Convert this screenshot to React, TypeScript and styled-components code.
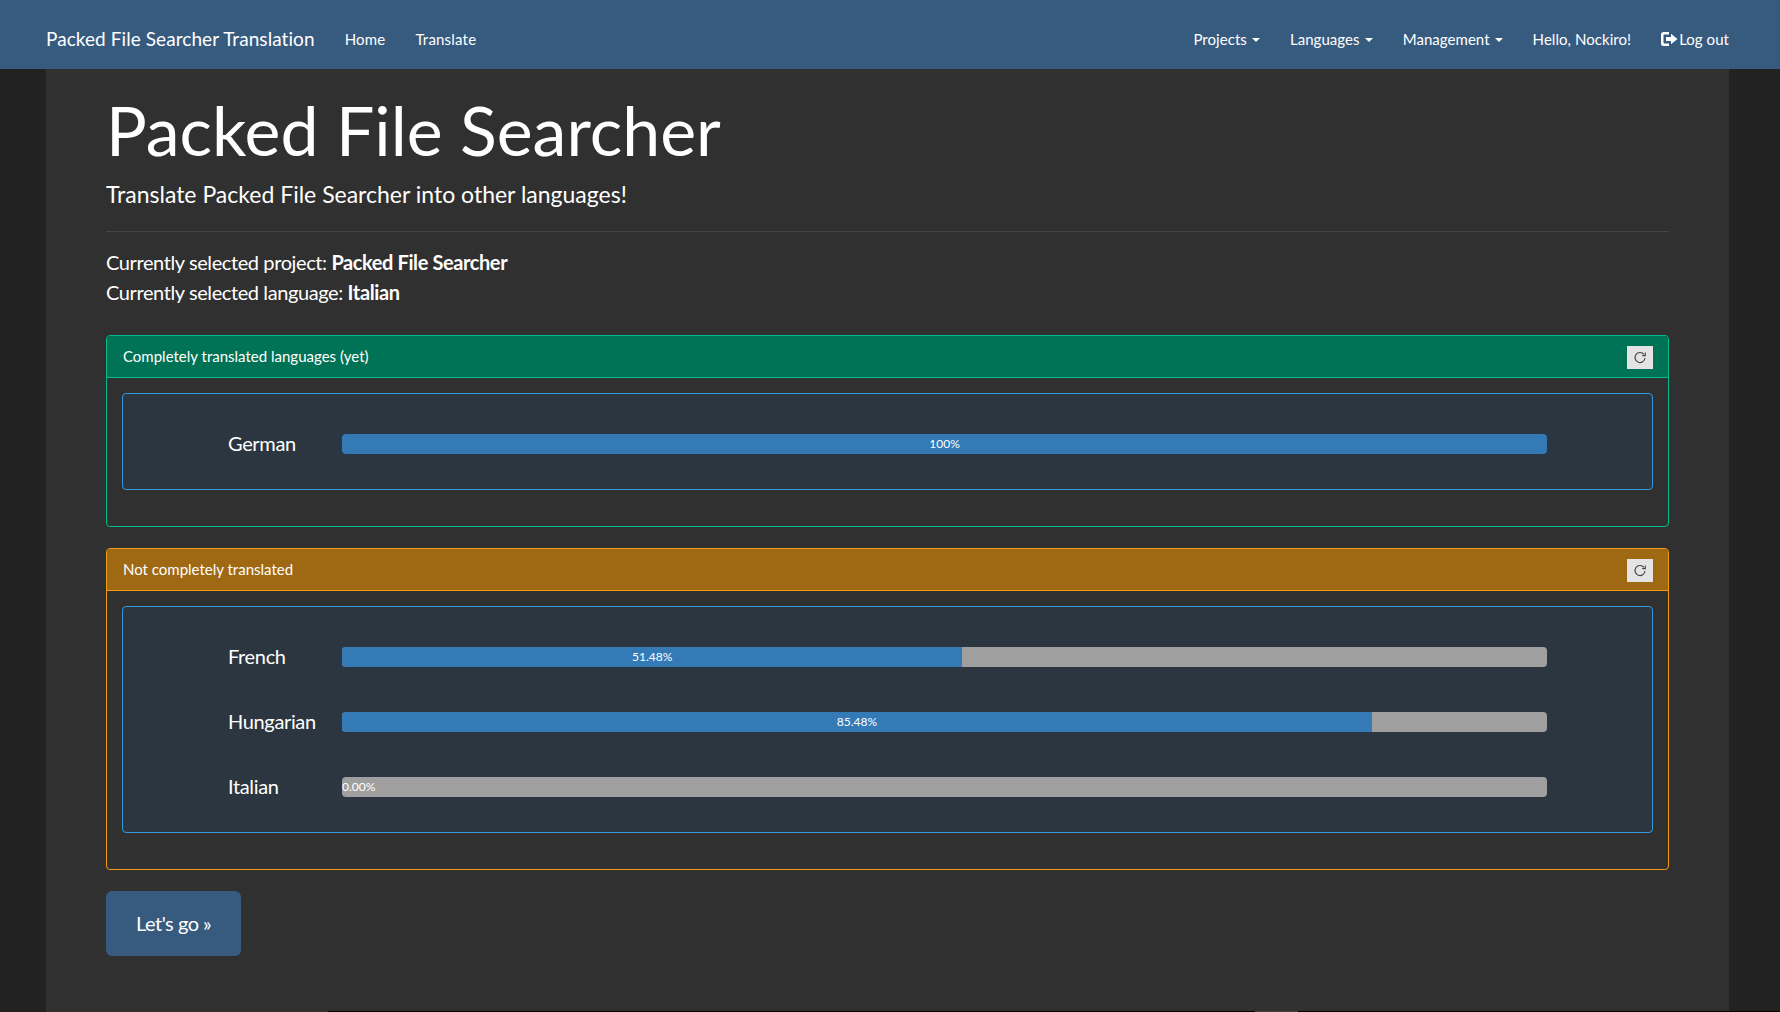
import React from 'react'
import styled, { createGlobalStyle } from 'styled-components'

const GlobalStyle = createGlobalStyle`
  html, body {
    margin: 0;
    height: 100%;
    overflow: hidden;
    background: #222222;
  }
  body {
    font-family: Lato, "Liberation Sans", sans-serif;
    color: #ffffff;
  }
`

const Navbar = styled.nav`
  box-sizing: border-box;
  height: 69px;
  background: #375a7f;
  display: flex;
  align-items: center;
  justify-content: space-between;
  padding: 9px 51px 0 46px;
  font-size: 15px;
`

const NavGroup = styled.div<{ $spacing: number }>`
  display: flex;
  align-items: center;
  gap: 30px;
  letter-spacing: ${p => p.$spacing}px;
`

const Brand = styled.a`
  font-size: 19px;
  letter-spacing: 0.07px;
  margin-top: -2px;
`

const NavLink = styled.a`
  display: flex;
  align-items: center;
`

const Caret = styled.span`
  display: inline-block;
  margin-left: 5px;
  margin-top: 2px;
  border-top: 4px solid #fff;
  border-left: 4px solid transparent;
  border-right: 4px solid transparent;
`

const Page = styled.main`
  box-sizing: border-box;
  width: 1683px;
  height: 943px;
  margin-left: 46px;
  padding: 23px 60px 0;
  background: #303030;
`

const Title = styled.h1`
  margin: 0;
  font-size: 68px;
  font-weight: 400;
  line-height: 75px;
`

const Lead = styled.p`
  margin: 10px 0 0;
  font-size: 23px;
  line-height: 34px;
`

const Rule = styled.hr`
  margin: 20px 0 0;
  border: 0;
  border-top: 1px solid #464545;
`

const Selected = styled.div`
  margin-top: 15px;
  font-size: 20px;
  line-height: 30px;
  letter-spacing: -0.4px;
`

const Panel = styled.section<{ $accent: string; $gap: number }>`
  box-sizing: border-box;
  margin-top: ${p => p.$gap}px;
  border: 1px solid ${p => p.$accent};
  border-radius: 4px;
  padding-bottom: 36px;
`

const PanelHeader = styled.header<{ $bg: string; $accent: string }>`
  box-sizing: border-box;
  height: 42px;
  display: flex;
  align-items: center;
  justify-content: space-between;
  padding: 0 15px 1px 16px;
  background: ${p => p.$bg};
  border-bottom: 1px solid ${p => p.$accent};
  border-radius: 3px 3px 0 0;
  font-size: 15px;
`

const RefreshButton = styled.span`
  width: 26px;
  height: 23px;
  display: flex;
  align-items: center;
  justify-content: center;
  background: #e4e4e4;
  margin-top: 3px;
`

const Well = styled.div`
  margin: 15px 15px 0;
  padding: 40px 105px 35px;
  background: #2b3640;
  border: 1px solid #3498db;
  border-radius: 4px;
  display: flex;
  flex-direction: column;
  gap: 45px;
`

const Row = styled.div`
  display: grid;
  grid-template-columns: 114px 1fr;
  grid-template-rows: 20px;
  align-items: center;
`

const Language = styled.span`
  font-size: 20px;
  letter-spacing: -0.35px;
  margin-top: -2px;
`

const Track = styled.div`
  height: 20px;
  background: #9f9f9f;
  border-radius: 4px;
  overflow: hidden;
  position: relative;
  font-size: 12px;
  line-height: 20px;
`

const Fill = styled.div`
  height: 100%;
  background: #337ab7;
  text-align: center;
`

const ZeroLabel = styled.span`
  position: absolute;
  left: 0;
  top: 0;
`

const GoButton = styled.a`
  display: block;
  width: fit-content;
  margin-top: 21px;
  padding: 0 30px;
  height: 65px;
  line-height: 65px;
  background: #375a7f;
  border-radius: 6px;
  font-size: 20px;
  letter-spacing: -0.5px;
`

// 1px line along the bottom edge of the window
const BottomEdge = styled.div`
  position: fixed;
  left: 328px;
  right: 0;
  bottom: 0;
  height: 1px;
  background: #000;
`

const BottomEdgeGap = styled.div`
  position: absolute;
  left: 927px;
  width: 43px;
  height: 1px;
  background: #444;
`

const RefreshIcon = () => (
  <svg width="14" height="14" viewBox="0 0 14 14" fill="none" stroke="#444" strokeWidth="1.1">
    <path d="M10.9 3.4A5 5 0 1 0 12 7" />
    <path d="M12.3 1.6v3H9.3" />
  </svg>
)

const LogOutIcon = () => (
  <svg width="17" height="14" viewBox="0 0 17 14" fill="#fff" style={{ marginRight: 1 }}>
    <path d="M0 2.500A2.500 2.500 0 0 1 2.500 0H8v2.500H3.500a1 1 0 0 0-1 1v7a1 1 0 0 0 1 1H8V14H2.500A2.500 2.500 0 0 1 0 11.500z" />
    <path d="M5 5h5V1.800L16.500 7 10 12.200V9H5z" />
  </svg>
)

const Refresh = () => (
  <RefreshButton>
    <RefreshIcon />
  </RefreshButton>
)

const Bar = ({ name, value, label }: { name: string; value: number; label: string }) => (
  <Row>
    <Language>{name}</Language>
    <Track>
      {value > 0 ? <Fill style={{ width: `${value}%` }}>{label}</Fill> : <ZeroLabel>{label}</ZeroLabel>}
    </Track>
  </Row>
)

export default function App() {
  return (
    <>
      <GlobalStyle />
      <Navbar>
        <NavGroup $spacing={0.2}>
          <Brand>Packed File Searcher Translation</Brand>
          <NavLink>Home</NavLink>
          <NavLink>Translate</NavLink>
        </NavGroup>
        <NavGroup $spacing={0.05}>
          <NavLink>Projects<Caret /></NavLink>
          <NavLink>Languages<Caret /></NavLink>
          <NavLink>Management<Caret /></NavLink>
          <NavLink>Hello, Nockiro!</NavLink>
          <NavLink><LogOutIcon />Log out</NavLink>
        </NavGroup>
      </Navbar>
      <Page>
        <Title>Packed File Searcher</Title>
        <Lead>Translate Packed File Searcher into other languages!</Lead>
        <Rule />
        <Selected>
          Currently selected project: <b>Packed File Searcher</b>
          <br />
          Currently selected language: <b>Italian</b>
        </Selected>
        <Panel $accent="#00bc8c" $gap={28}>
          <PanelHeader $bg="#007256" $accent="#00bc8c">
            Completely translated languages (yet)
            <Refresh />
          </PanelHeader>
          <Well>
            <Bar name="German" value={100} label="100%" />
          </Well>
        </Panel>
        <Panel $accent="#f39c12" $gap={21}>
          <PanelHeader $bg="#9f6914" $accent="#f39c12">
            Not completely translated
            <Refresh />
          </PanelHeader>
          <Well>
            <Bar name="French" value={51.48} label="51.48%" />
            <Bar name="Hungarian" value={85.48} label="85.48%" />
            <Bar name="Italian" value={0} label="0.00%" />
          </Well>
        </Panel>
        <GoButton>Let's go »</GoButton>
      </Page>
      <BottomEdge>
        <BottomEdgeGap />
      </BottomEdge>
    </>
  )
}
